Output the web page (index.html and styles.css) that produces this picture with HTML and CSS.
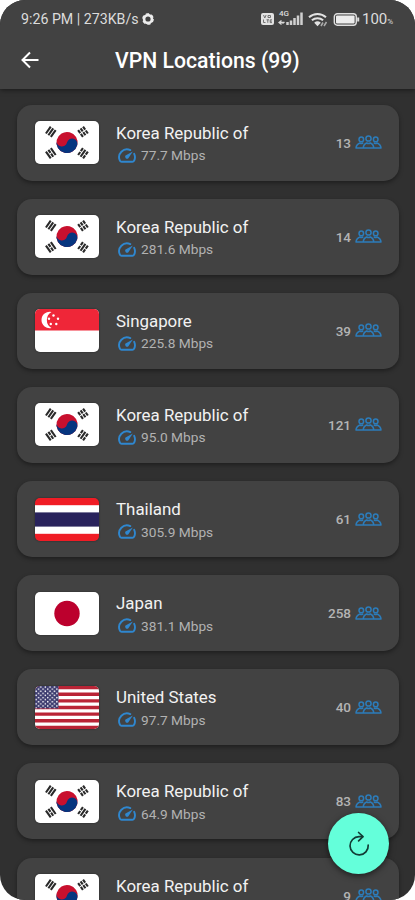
FILE: index.html
```html
<!DOCTYPE html>
<html lang="en">
<head>
<meta charset="utf-8">
<title>VPN Locations</title>
<link rel="stylesheet" href="styles.css">
</head>
<body>
<svg class="defs" aria-hidden="true">
  <defs>
    <symbol id="kr" viewBox="0 0 64 43">
      <rect width="64" height="43" fill="#fff"/>
      <g transform="rotate(14 32 21.5)">
        <circle cx="32" cy="21.5" r="10.6" fill="#c8102e"/>
        <path d="M21.4 21.5a5.3 5.3 0 0 0 10.6 0a5.3 5.3 0 0 1 10.6 0a10.6 10.6 0 0 1-21.2 0z" fill="#06357f"/>
      </g>
      <g stroke="#2a2a2a" stroke-width="2.1">
        <path d="M-4.2-3h8.4M-4.2 0h8.4M-4.2 3h8.4" transform="translate(15.800 10.800) rotate(-55)"/>
        <path d="M-4.2-3h3.700m1 0h3.700M-4.2 0h3.700m1 0h3.700M-4.2 3h3.700m1 0h3.700" transform="translate(48 10.800) rotate(55)"/>
        <path d="M-4.2-3h8.4M-4.2 0h3.700m1 0h3.700M-4.2 3h8.4" transform="translate(15.800 32.300) rotate(55)"/>
        <path d="M-4.2-3h3.700m1 0h3.700M-4.2 0h8.4M-4.2 3h3.700m1 0h3.700" transform="translate(48 32.300) rotate(-55)"/>
      </g>
    </symbol>
    <symbol id="sg" viewBox="0 0 64 43">
      <rect width="64" height="43" fill="#fff"/>
      <rect width="64" height="21.5" fill="#ef2638"/>
      <path d="M16.5 3a8.200 8.200 0 1 0 0 16a9.200 9.200 0 0 1 0-16z" fill="#fff"/>
      <g fill="#fff"><circle cx="18.5" cy="6.5" r="1.200"/><circle cx="14" cy="9.800" r="1.200"/><circle cx="23" cy="9.800" r="1.200"/><circle cx="15.800" cy="15" r="1.200"/><circle cx="21.300" cy="15" r="1.200"/></g>
    </symbol>
    <symbol id="th" viewBox="0 0 64 43">
      <rect width="64" height="43" fill="#f01c25"/>
      <rect y="7.2" width="64" height="28.6" fill="#fff"/>
      <rect y="14.4" width="64" height="14.2" fill="#29235c"/>
    </symbol>
    <symbol id="jp" viewBox="0 0 64 43">
      <rect width="64" height="43" fill="#fff"/>
      <circle cx="32" cy="21.5" r="12.7" fill="#bc002d"/>
    </symbol>
    <pattern id="stars" width="4.6" height="4.2" patternUnits="userSpaceOnUse">
      <circle cx="1.2" cy="1.1" r=".8" fill="#fff"/><circle cx="3.5" cy="3.2" r=".8" fill="#fff"/>
    </pattern>
    <symbol id="us" viewBox="0 0 64 43">
      <rect width="64" height="43" fill="#fff"/>
      <path d="M0 1.65h64M0 8.27h64M0 14.88h64M0 21.5h64M0 28.12h64M0 34.73h64M0 41.35h64" stroke="#b92436" stroke-width="3.31"/>
      <rect width="23.5" height="22.4" fill="#3c3b6e"/>
      <rect width="23.5" height="22.4" fill="url(#stars)"/>
    </symbol>
    <symbol id="gauge" viewBox="0 0 18 15">
      <path d="M12.300 2.100A7.900 7.900 0 0 0 1.900 12.700c.3.700.9 1.100 1.700 1.100h10.800c.8 0 1.400-.4 1.700-1.100a7.900 7.900 0 0 0 .1-6.900" fill="none" stroke="#2f87cf" stroke-width="1.900" stroke-linecap="round"/>
      <path d="M14.800 3.500l-4.400 6.800a2 2 0 0 1-2.900-2.700z" fill="#2f87cf"/>
    </symbol>
    <symbol id="people" viewBox="0 0 27 15">
      <g fill="none" stroke="#2c7cba" stroke-width="1.5" stroke-linejoin="round">
        <circle cx="6.300" cy="4.400" r="2.300"/>
        <circle cx="20.700" cy="4.400" r="2.300"/>
        <circle cx="13.5" cy="3.500" r="2.600"/>
        <path d="M8.300 13c0-3 1-4 3.300-5q1.900 1 3.800 0c2.300 1 3.300 2 3.300 5zM8.300 8.500L7.600 8q-1.300.8-2.600 0C2.500 9 1.200 10.400 1 13h7.300M18.700 8.500l.7-.5q1.300.8 2.600 0c2.500 1 3.800 2.400 4 5h-7.300"/>
      </g>
    </symbol>
  </defs>
</svg>
<div class="phone">
  <header class="top">
    <div class="status">
      <span class="clock">9:26 PM | 273KB/s</span>
      <svg class="gear" viewBox="0 0 12 12"><circle cx="6" cy="6" r="3.900" fill="none" stroke="#ececec" stroke-width="2.600"/><circle cx="6" cy="6" r="5.200" fill="none" stroke="#ececec" stroke-width="1.300" stroke-dasharray="3.200 2.245"/></svg>
      <span class="push"></span>
      <svg class="volte" viewBox="0 0 13 12"><rect width="13" height="12" rx="2" fill="#e2e2e2"/><path d="M2.500 2l1.300 3l1.300-3M7 2.500h2.500v2H7zM2.500 6.500v3h2M5.500 6.800h2.500M6.800 6.800v3M11 6.800H9.200v2.800H11M9.200 8.200h1.600" fill="none" stroke="#666" stroke-width=".9"/></svg>
      <span class="signal">
        <svg viewBox="0 0 26 15"><path d="M1 11.500h5M3.500 9.500l-2.500 2l2.500 2M4.500 12.500l2-1.500" stroke="#d8d8d8" stroke-width="1.300" fill="none"/><path d="M9.500 14v-3M13 14V9.500M16.500 14V7M20 14V4.500M23.500 14V1.500" stroke="#d0d0d0" stroke-width="2.500"/></svg>
        <i>4G</i>
      </span>
      <svg class="wifi" viewBox="0 0 20 15"><g fill="none" stroke="#e2e2e2" stroke-width="2"><path d="M1 5.300a12.500 12.500 0 0 1 17 0M3.900 8.300a8.500 8.500 0 0 1 11.200 0"/></g><path d="M6.200 10.700a5 5 0 0 1 6.600 0L9.500 14.200z" fill="#e2e2e2"/><path d="M13 14l2-3.500M16 14l2.500-4" stroke="#aaa" stroke-width="1.600"/></svg>
      <svg class="battery" viewBox="0 0 26 13"><rect x=".8" y=".8" width="22" height="11.400" rx="3" fill="none" stroke="#dedede" stroke-width="1.400"/><rect x="2.500" y="2.500" width="18.600" height="8" rx="1" fill="#ececec"/><path d="M24.700 4.500v4" stroke="#dedede" stroke-width="2"/></svg>
      <span class="pct">100<small>%</small></span>
    </div>
    <div class="bar">
      <svg class="back" viewBox="0 0 18 18"><path d="M17.500 9H1.700M9 1.500L1.500 9L9 16.500" fill="none" stroke="#fff" stroke-width="2"/></svg>
      <h1>VPN Locations (99)</h1>
    </div>
  </header>
  <main class="list">
    <article class="card"><svg class="flag"><use href="#kr"/></svg><div class="info"><h2>Korea Republic of</h2><p><svg><use href="#gauge"/></svg>77.7 Mbps</p></div><span class="users">13<svg><use href="#people"/></svg></span></article>
    <article class="card"><svg class="flag"><use href="#kr"/></svg><div class="info"><h2>Korea Republic of</h2><p><svg><use href="#gauge"/></svg>281.6 Mbps</p></div><span class="users">14<svg><use href="#people"/></svg></span></article>
    <article class="card"><svg class="flag"><use href="#sg"/></svg><div class="info"><h2>Singapore</h2><p><svg><use href="#gauge"/></svg>225.8 Mbps</p></div><span class="users">39<svg><use href="#people"/></svg></span></article>
    <article class="card"><svg class="flag"><use href="#kr"/></svg><div class="info"><h2>Korea Republic of</h2><p><svg><use href="#gauge"/></svg>95.0 Mbps</p></div><span class="users">121<svg><use href="#people"/></svg></span></article>
    <article class="card"><svg class="flag"><use href="#th"/></svg><div class="info"><h2>Thailand</h2><p><svg><use href="#gauge"/></svg>305.9 Mbps</p></div><span class="users">61<svg><use href="#people"/></svg></span></article>
    <article class="card"><svg class="flag"><use href="#jp"/></svg><div class="info"><h2>Japan</h2><p><svg><use href="#gauge"/></svg>381.1 Mbps</p></div><span class="users">258<svg><use href="#people"/></svg></span></article>
    <article class="card"><svg class="flag"><use href="#us"/></svg><div class="info"><h2>United States</h2><p><svg><use href="#gauge"/></svg>97.7 Mbps</p></div><span class="users">40<svg><use href="#people"/></svg></span></article>
    <article class="card"><svg class="flag"><use href="#kr"/></svg><div class="info"><h2>Korea Republic of</h2><p><svg><use href="#gauge"/></svg>64.9 Mbps</p></div><span class="users">83<svg><use href="#people"/></svg></span></article>
    <article class="card"><svg class="flag"><use href="#kr"/></svg><div class="info"><h2>Korea Republic of</h2></div><span class="users">9<svg><use href="#people"/></svg></span></article>
  </main>
  <button class="fab" aria-label="Refresh">
    <svg viewBox="0 0 22 26"><path d="M20.200 14.200A9.100 9.100 0 1 1 11 5.700h3.500" fill="none" stroke="#123c35" stroke-width="1.700" stroke-linecap="round"/><path d="M10.600 1.500l4.400 4.200l-4.400 4.200" fill="none" stroke="#123c35" stroke-width="1.700" stroke-linecap="round" stroke-linejoin="round"/></svg>
  </button>
</div>
</body>
</html>
```
FILE: styles.css
```css
* { box-sizing: border-box; margin: 0; padding: 0; }
body { background: #fff; font-family: Roboto, sans-serif; }
.defs { position: absolute; width: 0; height: 0; }
.phone {
  position: relative;
  width: 415px;
  height: 900px;
  overflow: hidden;
  border-radius: 25px;
  background: #303030;
}
.top {
  position: relative;
  height: 89px;
  background: #424242;
  box-shadow: 0 1px 5px rgba(0, 0, 0, .5);
}
.status {
  display: flex;
  align-items: center;
  height: 38px;
  padding: 0 20px 0 21px;
  color: #dcdcdc;
  font-size: 14.200px;
}
.clock { width: 118px; white-space: nowrap; }
.gear { width: 12px; height: 12px; margin-left: 3px; }
.push { flex: 1; }
.volte { width: 13px; height: 12px; }
.signal { position: relative; width: 26px; height: 15px; margin: -2px 4px 0 4px; }
.signal svg { display: block; width: 26px; height: 15px; }
.signal i { position: absolute; left: 1px; top: -1px; font: 500 8px/8px Roboto, sans-serif; }
.wifi { width: 20px; height: 15px; margin-right: 5px; }
.battery { width: 27px; height: 13px; margin-right: 2px; }
.pct { width: 33px; font-size: 15px; white-space: nowrap; }
.pct small { font-size: 8px; }
.bar { display: flex; align-items: center; height: 44px; padding-left: 21px; }
.back { width: 18px; height: 18px; }
.bar h1 {
  margin-left: 76px;
  color: #fff;
  font-size: 21.200px;
  font-weight: 500;
  white-space: nowrap;
}
.list { display: flex; flex-direction: column; gap: 18.150px; padding: 15.500px 16px 0 17px; }
.card {
  display: flex;
  flex: none;
  align-items: center;
  height: 76px;
  padding: 0 17px 0 18px;
  border-radius: 15px;
  background: #424242;
  box-shadow: 0 2px 4px rgba(0, 0, 0, .38);
}
.flag { width: 64px; height: 43px; border-radius: 5px; box-shadow: 0 0 2px rgba(0, 0, 0, .5); }
.info { flex: 1; height: 76px; padding: 16px 0 0 17px; }
.info h2 { color: #f2f2f2; font-size: 16.900px; font-weight: 400; line-height: 24px; white-space: nowrap; }
.info p { display: flex; align-items: center; height: 21px; color: #b2b2b2; font-size: 13.700px; }
.info p svg { width: 18px; height: 15px; margin: 0 5px 0 2px; }
.users { display: flex; align-items: center; color: #b4b4b4; font-size: 13.500px; font-weight: 500; }
.users svg { width: 27px; height: 15px; margin-left: 4px; }
.fab {
  position: absolute;
  left: 328px;
  top: 813px;
  display: flex;
  align-items: center;
  justify-content: center;
  width: 61px;
  height: 61px;
  border: 0;
  border-radius: 50%;
  background: #64ffda;
  box-shadow: 0 2px 6px rgba(0, 0, 0, .55);
}
.fab svg { width: 22px; height: 26px; }
```
